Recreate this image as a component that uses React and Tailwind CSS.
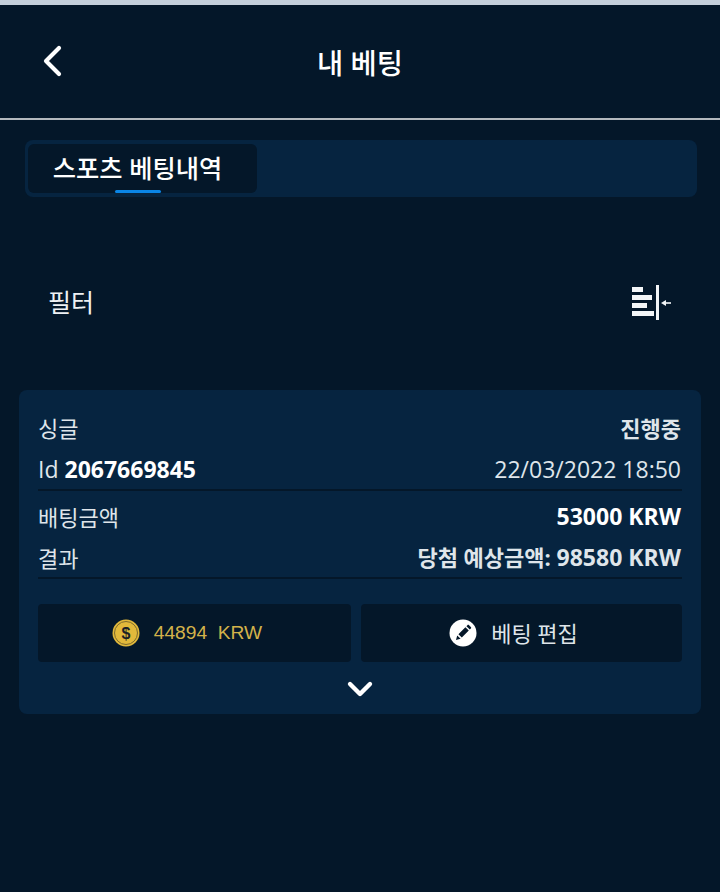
import { ChevronDown } from 'lucide-react';

const FONT = 'font-["Open_Sans","Noto_Sans_CJK_KR",sans-serif]';

function BackIcon() {
  return (
    <svg width="20" height="32" viewBox="0 0 20 32" className="block">
      <path d="M17 3L4 16l13 13" fill="none" stroke="#fff" strokeWidth="4.2" strokeLinecap="round" strokeLinejoin="round" />
    </svg>
  );
}

function CollapseIcon() {
  return (
    <svg width="40" height="36" viewBox="0 0 40 36" className="block">
      <g fill="#f3f5f7">
        <rect x="0" y="3" width="11" height="5" />
        <rect x="0" y="11" width="20" height="5" />
        <rect x="0" y="19" width="15" height="5" />
        <rect x="0" y="27" width="22" height="5" />
        <rect x="24" y="1" width="3" height="35" />
        <rect x="33" y="18.2" width="6" height="1.6" />
        <path d="M29 19l5-3v6z" />
      </g>
    </svg>
  );
}

function CoinIcon() {
  return (
    <svg width="28" height="28" viewBox="0 0 28 28" className="block">
      <circle cx="14" cy="14" r="13.5" fill="#e2b93b" />
      <circle cx="14" cy="14" r="11.5" fill="none" stroke="#7d6a2c" strokeWidth="1" />
      <text
        x="14"
        y="19.5"
        textAnchor="middle"
        fontSize="16"
        fontWeight="700"
        fill="#1a2026"
        fontFamily="Liberation Sans, sans-serif"
      >
        $
      </text>
    </svg>
  );
}

function EditIcon() {
  return (
    <svg width="28" height="28" viewBox="0 0 28 28" className="block">
      <circle cx="14" cy="14" r="13.5" fill="#fff" />
      <path d="M7 21l1.2-4.6 3.4 3.4zM9.4 15.2l7-7 3.4 3.4-7 7z" fill="#041729" />
      <path d="M17.4 7.2l1-1c.5-.5 1.2-.5 1.7 0l1.7 1.7c.5.5.5 1.2 0 1.7l-1 1z" fill="#041729" />
    </svg>
  );
}

export default function App() {
  return (
    <div className={`h-[892px] w-[720px] overflow-hidden bg-[#041729] text-white ${FONT}`}>
      <div className="h-[5px] bg-[#c4cfdb]" />

      {/* header */}
      <header className="relative flex h-[115px] items-center justify-center border-b-2 border-[#b4b9be] pt-[3px]">
        <span className="absolute left-[42px] top-[40px]">
          <BackIcon />
        </span>
        <h1 className="text-[28.5px] font-medium leading-none">내 베팅</h1>
      </header>

      {/* tabs */}
      <div className="ml-[25px] mr-[23px] mt-[20px] flex h-[57px] items-center rounded-lg bg-[#062440] pl-[3px]">
        <div className="relative flex h-[49px] w-[229px] items-center justify-center rounded-md bg-[#041729] pr-[10px] text-[25.3px] font-medium leading-none">
          스포츠 베팅내역
          <span className="absolute bottom-0 left-[87px] h-[3px] w-[46px] rounded-sm bg-[#0a85e6]" />
        </div>
      </div>

      {/* filter */}
      <div className="mt-[80px] flex h-[50px] items-center justify-between pl-[48px] pr-[48px]">
        <span className="text-[25px] leading-none text-[#eef1f4]">필터</span>
        <CollapseIcon />
      </div>

      {/* bet card */}
      <div className="mx-[19px] mt-[63px] h-[324px] rounded-lg bg-[#062440] px-[19px] pt-[20px]">
        <div className="flex h-[36px] items-center justify-between pr-px text-[22px] leading-none text-[#dfe5ea]">
          <span>싱글</span>
          <span className="font-bold">진행중</span>
        </div>
        <div className="flex h-[45px] items-center justify-between border-b-2 border-[#041729] pr-px pt-[4px] text-[23px] leading-none text-[#dfe5ea]">
          <span>
            Id <span className="font-bold text-white">2067669845</span>
          </span>
          <span>22/03/2022 18:50</span>
        </div>
        <div className="mt-[4px] flex h-[41px] items-center justify-between pr-px pt-[2px] text-[22px] leading-none text-[#dfe5ea]">
          <span>배팅금액</span>
          <span className="text-[23px] font-bold text-white">53000 KRW</span>
        </div>
        <div className="flex h-[43px] items-center justify-between border-b-2 border-[#041729] pr-px pt-[2px] text-[22px] leading-none text-[#dfe5ea]">
          <span>결과</span>
          <span className="font-bold">
            당첨 예상금액: <span className="text-[23px]">98580 KRW</span>
          </span>
        </div>

        <div className="mt-[25px] flex gap-[10px]">
          <button className="flex h-[58px] w-[313px] items-center justify-center gap-[14px] rounded bg-[#041729] pr-[15px] font-['Liberation_Sans',sans-serif] text-[19.2px] text-[#d3b24a]">
            <CoinIcon />
            <span className="whitespace-pre">44894  KRW</span>
          </button>
          <button className="flex h-[58px] flex-1 items-center justify-center gap-[14px] rounded bg-[#041729] pr-[16px] text-[22px] text-[#dfe5ea]">
            <EditIcon />
            <span>베팅 편집</span>
          </button>
        </div>

        <div className="mt-[7px] flex justify-center">
          <ChevronDown className="text-white" size={40} strokeWidth={2.6} />
        </div>
      </div>
    </div>
  );
}
